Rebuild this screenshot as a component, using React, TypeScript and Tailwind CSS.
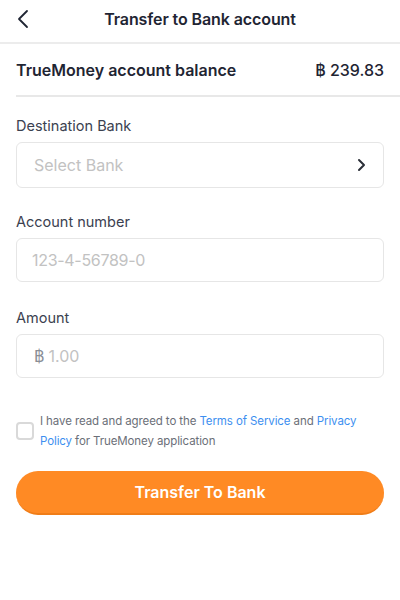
import React, { useState } from 'react';

const font = { fontFamily: 'Inter, "Noto Sans", sans-serif' };

const ChevronLeft: React.FC = () => (
  <svg width="14" height="20" viewBox="0 0 14 20" fill="none">
    <path d="M11 2L3 10l8 8" stroke="#1f2533" strokeWidth="1.8" strokeLinecap="round" strokeLinejoin="round" />
  </svg>
);

const ChevronRight: React.FC = () => (
  <svg width="10" height="14" viewBox="0 0 10 14" fill="none">
    <path d="M3 2l5 5-5 5" stroke="#2b2f38" strokeWidth="2" strokeLinecap="round" strokeLinejoin="round" />
  </svg>
);

const Field: React.FC<{ label: string; boxClass: string; children: React.ReactNode }> = ({ label, boxClass, children }) => (
  <div className="flex flex-col">
    <label className="text-[14.5px] leading-5 text-[#3b4150] mb-[6px]">{label}</label>
    <div className={`${boxClass} rounded-[6px] border border-[#e6e6e6] bg-white flex items-center px-[17px]`}>
      {children}
    </div>
  </div>
);

const App: React.FC = () => {
  const [agreed, setAgreed] = useState(false);

  return (
    <div className="w-[400px] h-[600px] bg-white flex flex-col" style={font}>
      {/* Top bar */}
      <div className="h-[44px] shrink-0 relative flex items-center justify-center border-b-2 border-[#ececec]">
        <button className="absolute left-[16px] top-[9px]">
          <ChevronLeft />
        </button>
        <h1 className="text-[16px] font-semibold text-[#1f2533] tracking-[-0.1px] -mt-[4px]">Transfer to Bank account</h1>
      </div>

      {/* Balance */}
      <div className="pl-[16px] shrink-0">
        <div className="h-[53px] flex items-center justify-between pr-[16px] border-b-2 border-[#e8e8e8]">
          <span className="text-[16px] font-semibold text-[#1f2533]">TrueMoney account balance</span>
          <span className="text-[16px] font-medium text-[#1f2533]">฿ 239.83</span>
        </div>
      </div>

      {/* Form */}
      <div className="px-[16px] pt-[19px] flex flex-col">
        <Field label="Destination Bank" boxClass="h-[46px]">
          <span className="flex-1 text-[16px] text-[#c2c2c2]">Select Bank</span>
          <ChevronRight />
        </Field>
        <div className="h-[24px]" />
        <Field label="Account number" boxClass="h-[44px]">
          <span className="text-[16px] text-[#c2c2c2] tracking-[-0.3px] -ml-[2px]">123-4-56789-0</span>
        </Field>
        <div className="h-[26px]" />
        <Field label="Amount" boxClass="h-[44px]">
          <span className="text-[16px] text-[#8a8e96] mr-[4px]">฿</span>
          <span className="text-[16px] text-[#c2c2c2]">1.00</span>
        </Field>
      </div>

      {/* Terms */}
      <div className="px-[16px] pt-[33px] flex items-center gap-[6px]">
        <button
          onClick={() => setAgreed(!agreed)}
          className="w-[18px] h-[18px] shrink-0 rounded-[4px] border-2 border-[#d9d9d9] bg-white"
        />
        <p className="text-[11.5px] leading-[20px] tracking-[-0.1px] text-[#6b6f78]">
          <span className="block">
            {' '}I have read and agreed to the <span className="text-[#3d8ff0]">Terms of Service</span> and{' '}
            <span className="text-[#3d8ff0]">Privacy</span>
          </span>
          <span className="block">
            <span className="text-[#3d8ff0]">Policy</span> for TrueMoney application
          </span>
        </p>
      </div>

      {/* Submit */}
      <div className="px-[16px] pt-[20px]">
        <button className="w-full h-[44px] rounded-full bg-[#ff8a24] border-b-2 border-[#f07d18] text-white text-[16px] font-semibold">
          Transfer To Bank
        </button>
      </div>
    </div>
  );
};

export default App;
